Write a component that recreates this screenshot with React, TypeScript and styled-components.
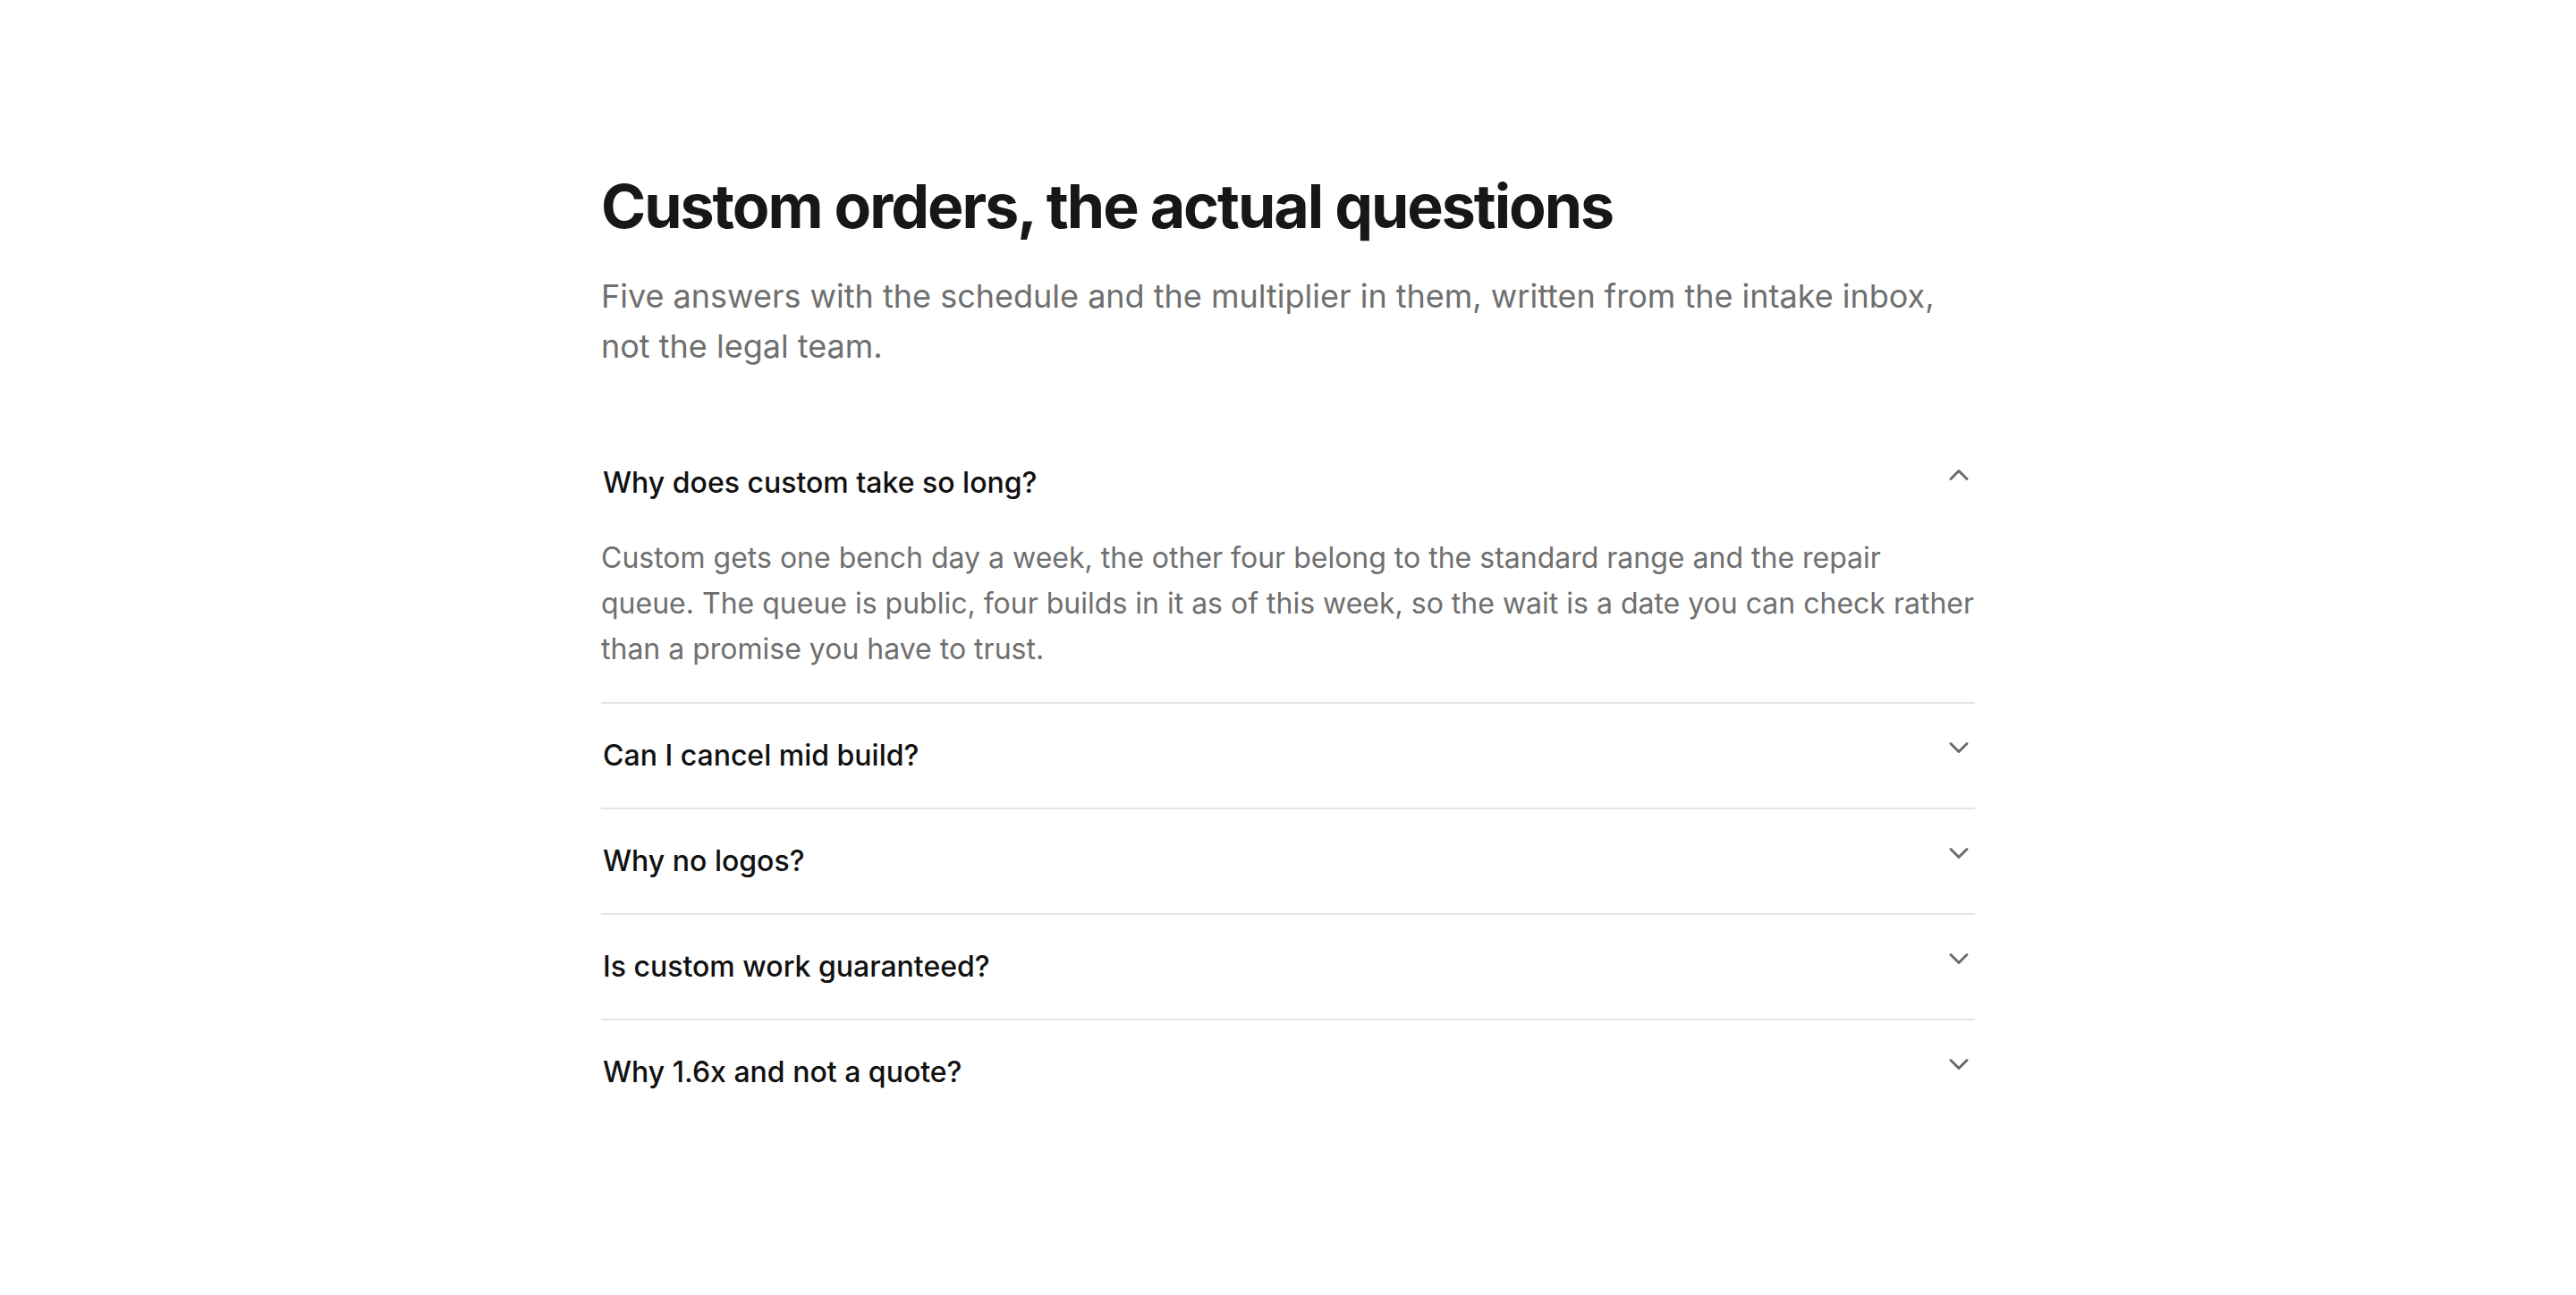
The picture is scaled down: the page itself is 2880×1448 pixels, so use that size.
import { useState } from 'react'
import styled, { createGlobalStyle } from 'styled-components'
import { ChevronDown, ChevronUp } from 'lucide-react'

const GlobalStyle = createGlobalStyle`
    html, body {
        margin: 0;
        padding: 0;
        background: #fff;
    }

    body {
        font-family: Inter, "Noto Sans", sans-serif;
        -webkit-font-smoothing: antialiased;
    }
`

const Page = styled.main`
    max-width: 1536px;
    margin: 0 auto;
    padding: 191px 0 120px;
`

const Title = styled.h1`
    margin: 0;
    font-size: 68px;
    line-height: 78px;
    font-weight: 700;
    letter-spacing: -0.03em;
    color: #171717;
`

const Lead = styled.p`
    margin: 34px 0 0;
    font-size: 36px;
    line-height: 56px;
    color: #6f6f6f;
`

const List = styled.div`
    margin-top: 67px;
`

const Item = styled.div<{ last: boolean }>`
    border-bottom: ${props => props.last ? 'none' : '2px solid #e5e5e5'};
`

const Trigger = styled.button`
    display: flex;
    align-items: flex-start;
    justify-content: space-between;
    width: 100%;
    padding: 34px 0 34px 2px;
    border: 0;
    background: none;
    font: inherit;
    text-align: left;
    cursor: pointer;
`

const Question = styled.span`
    font-size: 32px;
    line-height: 48px;
    font-weight: 500;
    color: #111;
`

const Icon = styled.span`
    display: flex;
    margin-top: -3px;
    color: #6b6b6b;

    svg {
        width: 36px;
        height: 36px;
    }
`

const Answer = styled.p`
    margin: 0;
    padding-bottom: 34px;
    font-size: 32px;
    line-height: 51px;
    color: #6f6f6f;
`

const faqs = [
    {
        q: 'Why does custom take so long?',
        a: 'Custom gets one bench day a week, the other four belong to the standard range and the repair queue. The queue is public, four builds in it as of this week, so the wait is a date you can check rather than a promise you have to trust.',
    },
    {
        q: 'Can I cancel mid build?',
        a: 'Yes, up to the day the bench slot starts. After that the materials are cut and the deposit covers them; the rest is refunded.',
    },
    {
        q: 'Why no logos?',
        a: 'Logos mean licensing, proofs and a second approval round. That is a week of email for a mark the size of a thumbnail.',
    },
    {
        q: 'Is custom work guaranteed?',
        a: 'Same warranty as the standard range. Custom dimensions are covered as long as they were in the signed sketch.',
    },
    {
        q: 'Why 1.6x and not a quote?',
        a: 'Quoting every order took longer than building some of them. The multiplier is the average of the last two years of quotes.',
    },
]

export default function App() {
    const [open, setOpen] = useState<number | null>(0)

    return (
        <>
            <GlobalStyle />
            <Page>
                <Title>Custom orders, the actual questions</Title>
                <Lead>
                    Five answers with the schedule and the multiplier in them, written from the intake inbox,
                    not the legal team.
                </Lead>
                <List>
                    {faqs.map((f, i) => (
                        <Item key={f.q} last={i === faqs.length - 1}>
                            <Trigger onClick={() => setOpen(open === i ? null : i)}>
                                <Question>{f.q}</Question>
                                <Icon>{open === i ? <ChevronUp /> : <ChevronDown />}</Icon>
                            </Trigger>
                            {open === i && <Answer>{f.a}</Answer>}
                        </Item>
                    ))}
                </List>
            </Page>
        </>
    )
}
